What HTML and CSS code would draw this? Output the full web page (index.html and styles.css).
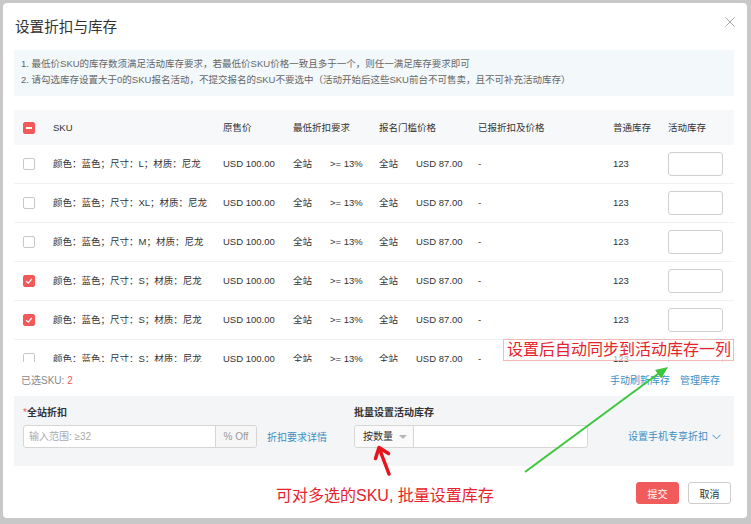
FILE: index.html
```html
<!DOCTYPE html>
<html>
<head>
<meta charset="utf-8">
<link rel="stylesheet" href="styles.css">
</head>
<body>
<div class="dialog">
  <div class="dlg-head">
    <h1 class="title">设置折扣与库存</h1>
    <svg class="close" viewBox="0 0 10 10"><path d="M0.5 0.5 L9.5 9.5 M9.5 0.5 L0.5 9.5" stroke="#a8a8a8" stroke-width="1" fill="none"/></svg>
  </div>
  <div class="notice">
    <p>1. 最低价SKU的库存数须满足活动库存要求，若最低价SKU价格一致且多于一个，则任一满足库存要求即可</p>
    <p>2. 请勾选库存设置大于0的SKU报名活动，不提交报名的SKU不要选中（活动开始后这些SKU前台不可售卖，且不可补充活动库存）</p>
  </div>
  <div class="table-wrap">
    <div class="row head">
      <span class="cb on"><i class="minus"></i></span>
      <span>SKU</span>
      <span>原售价</span>
      <span>最低折扣要求</span>
      <span>报名门槛价格</span>
      <span>已报折扣及价格</span>
      <span>普通库存</span>
      <span>活动库存</span>
    </div>
    <div class="row">
      <span class="cb"></span>
      <span>颜色：蓝色；尺寸：L；材质：尼龙</span>
      <span>USD 100.00</span>
      <span class="pair"><span>全站</span><span>&gt;= 13%</span></span>
      <span class="pair"><span>全站</span><span>USD 87.00</span></span>
      <span>-</span>
      <span>123</span>
      <span class="stock-in"></span>
    </div>
    <div class="row">
      <span class="cb"></span>
      <span>颜色：蓝色；尺寸：XL；材质：尼龙</span>
      <span>USD 100.00</span>
      <span class="pair"><span>全站</span><span>&gt;= 13%</span></span>
      <span class="pair"><span>全站</span><span>USD 87.00</span></span>
      <span>-</span>
      <span>123</span>
      <span class="stock-in"></span>
    </div>
    <div class="row">
      <span class="cb"></span>
      <span>颜色：蓝色；尺寸：M；材质：尼龙</span>
      <span>USD 100.00</span>
      <span class="pair"><span>全站</span><span>&gt;= 13%</span></span>
      <span class="pair"><span>全站</span><span>USD 87.00</span></span>
      <span>-</span>
      <span>123</span>
      <span class="stock-in"></span>
    </div>
    <div class="row">
      <span class="cb on"><svg viewBox="0 0 10 10" class="tick"><path d="M2.2 5.2 L4.3 7.2 L7.8 3" stroke="#fff" stroke-width="1.2" fill="none"/></svg></span>
      <span>颜色：蓝色；尺寸：S；材质：尼龙</span>
      <span>USD 100.00</span>
      <span class="pair"><span>全站</span><span>&gt;= 13%</span></span>
      <span class="pair"><span>全站</span><span>USD 87.00</span></span>
      <span>-</span>
      <span>123</span>
      <span class="stock-in"></span>
    </div>
    <div class="row">
      <span class="cb on"><svg viewBox="0 0 10 10" class="tick"><path d="M2.2 5.2 L4.3 7.2 L7.8 3" stroke="#fff" stroke-width="1.2" fill="none"/></svg></span>
      <span>颜色：蓝色；尺寸：S；材质：尼龙</span>
      <span>USD 100.00</span>
      <span class="pair"><span>全站</span><span>&gt;= 13%</span></span>
      <span class="pair"><span>全站</span><span>USD 87.00</span></span>
      <span>-</span>
      <span>123</span>
      <span class="stock-in"></span>
    </div>
    <div class="row">
      <span class="cb"></span>
      <span>颜色：蓝色；尺寸：S；材质：尼龙</span>
      <span>USD 100.00</span>
      <span class="pair"><span>全站</span><span>&gt;= 13%</span></span>
      <span class="pair"><span>全站</span><span>USD 87.00</span></span>
      <span>-</span>
      <span>123</span>
      <span class="stock-in"></span>
    </div>
  </div>
  <div class="sel-bar">
    <span class="sel">已选SKU: <b>2</b></span>
    <span class="links"><a>手动刷新库存</a><a>管理库存</a></span>
  </div>
  <div class="panel">
    <div class="grp g1">
      <div class="lbl"><em>*</em>全站折扣</div>
      <div class="ctl">
        <div class="ipt"><span class="ph">输入范围: ≥32</span><span class="addon">% Off</span></div>
        <a class="lnk">折扣要求详情</a>
      </div>
    </div>
    <div class="grp g2">
      <div class="lbl">批量设置活动库存</div>
      <div class="ctl">
        <div class="combo"><span class="sel-box">按数量<i class="caret"></i></span><span class="num"></span></div>
      </div>
    </div>
    <div class="grp g3">
      <a class="lnk">设置手机专享折扣<svg class="chev" viewBox="0 0 9 6"><path d="M0.5 0.8 L4.5 4.8 L8.5 0.8" stroke="#3b8fc4" stroke-width="1" fill="none"/></svg></a>
    </div>
  </div>
  <div class="foot">
    <button class="btn primary">提交</button>
    <button class="btn">取消</button>
  </div>
</div>

<div class="note note-top">设置后自动同步到活动库存一列</div>
<div class="note note-bottom">可对多选的SKU, 批量设置库存</div>
<svg class="arrows" viewBox="0 0 751 524">
  <line x1="525" y1="472" x2="662" y2="371" stroke="#3cc63c" stroke-width="2"/>
  <polygon points="668,367 661.3,378.5 655,370" fill="#3cc63c"/>
  <path d="M389 474 L379.5 449" stroke="#e8141b" stroke-width="3.5" stroke-linecap="round" fill="none"/>
  <path d="M375.5 458.5 L379 447.5 L388.5 453.5" stroke="#e8141b" stroke-width="3.5" stroke-linecap="round" stroke-linejoin="round" fill="none"/>
</svg>
</body>
</html>
```

FILE: styles.css
```css
* { box-sizing: border-box; margin: 0; padding: 0; }
html, body { width: 751px; height: 524px; overflow: hidden; }
body {
  background: #c8c8c8;
  font-family: "Liberation Sans", "Noto Sans CJK SC", sans-serif;
  font-size: 9.5px;
  color: #333;
  padding: 3px 0 0 3px;
  position: relative;
}
.dialog {
  width: 744px;
  height: 515px;
  background: #fff;
  border-radius: 4px;
  padding: 0 13px 0 11px;
  position: relative;
}
.dlg-head {
  height: 47px;
  display: flex;
  justify-content: space-between;
  align-items: flex-start;
}
.title {
  font-size: 14.6px;
  font-weight: normal;
  line-height: 20px;
  margin: 14px 0 0 1px;
  color: #333;
}
.close { width: 10px; height: 10px; margin-top: 14px; margin-right: -1px; display: block; }
.notice {
  background: #f3f8fb;
  height: 46px;
  padding: 6px 7px;
  color: #666;
  line-height: 16px;
  font-size: 9.5px;
}
.table-wrap { margin-top: 14px; height: 252px; overflow: hidden; }
.row {
  display: grid;
  grid-template-columns: 39px 170px 70px 86px 99px 135px 55px 1fr;
  align-items: center;
  height: 39px;
  line-height: 14px;
  border-bottom: 1px solid #eef0f3;
  white-space: nowrap;
}
.row.head { height: 35px; background: #f6f8fa; border-bottom: none; }
.cb {
  width: 12px;
  height: 12px;
  margin-left: 9px;
  border: 1px solid #c8c8c8;
  border-radius: 2px;
  background: #fff;
  display: flex;
  align-items: center;
  justify-content: center;
}
.cb.on { background: #f25a5a; border-color: #f25a5a; }
.minus { display: block; width: 6px; height: 2px; background: #fff; }
.tick { width: 10px; height: 10px; display: block; }
.pair { display: flex; align-items: center; height: 14px; }
.pair > span { line-height: 14px; }
.pair > span:first-child { width: 36px; }
.pair > span:last-child { margin-left: 1px; }
.stock-in {
  width: 55px;
  height: 24px;
  border: 1px solid #cfcfcf;
  border-radius: 3px;
  background: #fff;
}
.sel-bar {
  height: 34px;
  display: flex;
  justify-content: space-between;
  align-items: center;
  padding: 0 14px 0 7px;
  font-size: 10px;
}
.sel { color: #888; }
.sel b { color: #f25a5a; font-weight: normal; }
.links { display: flex; gap: 10px; }
.links a, .lnk { color: #3b8fc4; text-decoration: none; }
.panel {
  height: 70px;
  background: #f3f5f7;
  display: flex;
  padding: 10px 13px 0 9px;
  font-size: 10px;
}
.lbl { line-height: 14px; font-weight: bold; margin-bottom: 5px; color: #333; }
.lbl em { color: #f25a5a; font-style: normal; font-weight: normal; }
.ctl { display: flex; align-items: center; height: 23px; }
.g1 { width: 331px; }
.ipt {
  width: 234px;
  height: 23px;
  border: 1px solid #d6d6d6;
  border-radius: 3px;
  background: #fff;
  display: flex;
}
.ph { flex: 1; color: #aaa; line-height: 21px; padding-left: 5px; }
.addon {
  width: 41px;
  background: #f6f6f6;
  border-left: 1px solid #d6d6d6;
  color: #999;
  text-align: center;
  line-height: 21px;
  border-radius: 0 3px 3px 0;
}
.g1 .lnk { margin-left: 10px; }
.combo {
  width: 234px;
  height: 23px;
  border: 1px solid #d6d6d6;
  border-radius: 3px;
  background: #fff;
  display: flex;
}
.sel-box {
  width: 59px;
  border-right: 1px solid #d6d6d6;
  padding-left: 8px;
  line-height: 21px;
  display: flex;
  align-items: center;
  background: #fafafa;
  border-radius: 3px 0 0 3px;
}
.caret {
  display: block;
  width: 0;
  height: 0;
  margin-left: 6px;
  border-left: 4px solid transparent;
  border-right: 4px solid transparent;
  border-top: 4px solid #b5b5b5;
}
.num { flex: 1; }
.g3 { margin-left: auto; padding-top: 19px; line-height: 23px; }
.g3 .lnk { display: flex; align-items: center; }
.chev { width: 9px; height: 6px; margin-left: 4px; display: block; }
.foot {
  display: flex;
  justify-content: flex-end;
  gap: 9px;
  padding: 16px 3px 0 0;
}
.btn {
  width: 43px;
  height: 22px;
  border: 1px solid #ccc;
  border-radius: 3px;
  background: #fff;
  color: #333;
  font-family: inherit;
  font-size: 10px;
}
.btn.primary { background: #f25b5b; border-color: #f25b5b; color: #fff; }
.note {
  position: absolute;
  color: #e8222a;
  font-size: 16px;
  line-height: 20px;
  white-space: nowrap;
}
.note-top {
  left: 503px;
  top: 339px;
  width: 231px;
  height: 22px;
  border: 1px solid #f3b8b8;
  background: rgba(255, 255, 255, 0.6);
  padding-left: 3px;
}
.note-bottom { left: 276px; top: 486px; }
.arrows { position: absolute; left: 0; top: 0; width: 751px; height: 524px; pointer-events: none; }
```
